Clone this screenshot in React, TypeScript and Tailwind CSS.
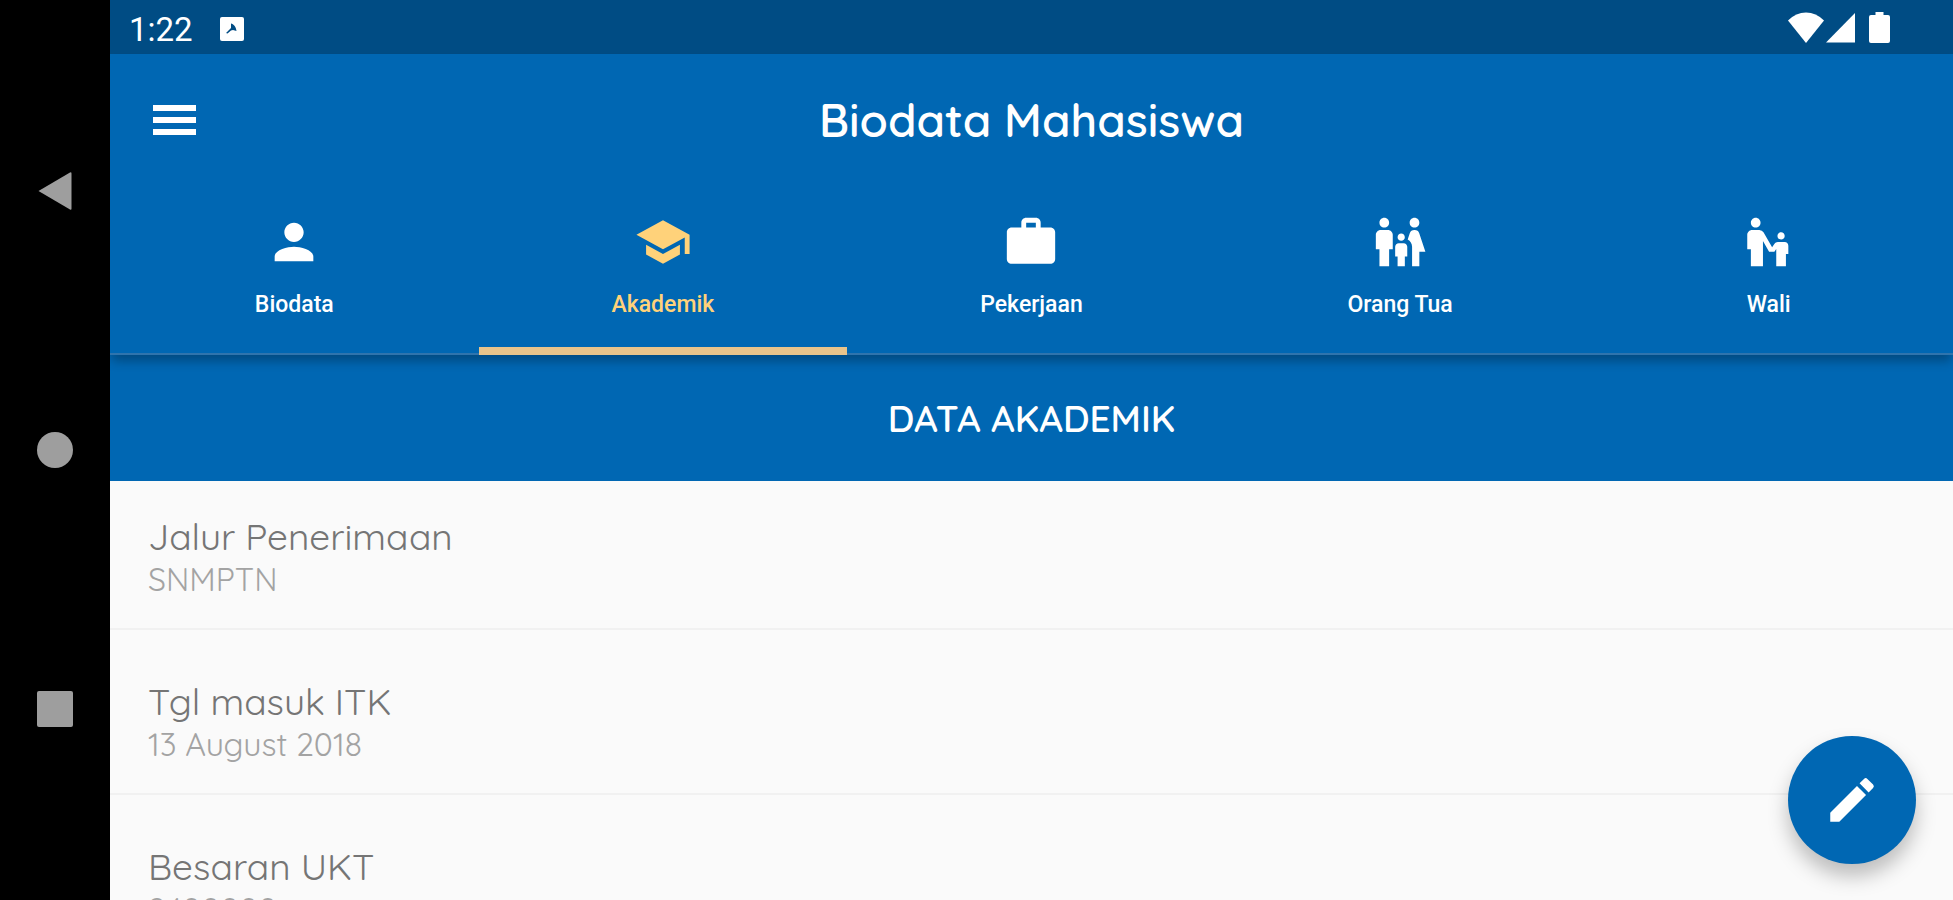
import React from 'react';
import {
  MdEdit,
  MdEscalatorWarning,
  MdFamilyRestroom,
  MdPerson,
  MdSchool,
  MdWork,
} from 'react-icons/md';

const tabs = [
  { label: 'Biodata', icon: MdPerson },
  { label: 'Akademik', icon: MdSchool },
  { label: 'Pekerjaan', icon: MdWork },
  { label: 'Orang Tua', icon: MdFamilyRestroom },
  { label: 'Wali', icon: MdEscalatorWarning },
];

const academicData = [
  { label: 'Jalur Penerimaan', value: 'SNMPTN' },
  { label: 'Tgl masuk ITK', value: '13 August 2018' },
  { label: 'Besaran UKT', value: '2400000' },
];

const SystemNav: React.FC = () => (
  <nav
    aria-label="System"
    className="flex w-[110px] shrink-0 flex-col items-center justify-center gap-[195px] bg-black text-[#9e9e9e]"
  >
    <button type="button" aria-label="Back" className="flex size-16 items-center justify-center">
      <svg className="h-10 w-9" viewBox="0 0 36 40" fill="currentColor">
        <path d="M33 1.5 1.5 20 33 38.5q1.500.8 1.500-1V2.500q0-1.800-1.500-1z" />
      </svg>
    </button>
    <button type="button" aria-label="Home" className="flex size-16 items-center justify-center">
      <span className="size-9 rounded-full bg-[#9e9e9e]" />
    </button>
    <button type="button" aria-label="Recent apps" className="flex size-16 items-center justify-center">
      <span className="size-9 rounded-xs bg-[#9e9e9e]" />
    </button>
  </nav>
);

const StatusBar: React.FC = () => (
  <div className="flex h-[54px] shrink-0 items-center justify-between bg-[#004c84] pr-[63px] pl-[19px] text-white">
    <div className="flex items-center gap-[27px] pt-1">
      <span className="font-[Roboto,sans-serif] text-[33px] leading-none">1:22</span>
      <svg className="size-6" viewBox="0 0 24 24">
        <rect width="24" height="24" rx="2" fill="#fff" />
        <path d="M11 6.500c2.500.5 5 3 5.500 7.500l-3.500-1-2 .5-3.500 3-1.500-.5 5-5z" fill="#004c84" />
      </svg>
    </div>
    <div className="flex items-center">
      <svg className="h-8 w-9" viewBox="0 0 36 32" fill="#fff">
        <path d="M18 32 0 9.500Q8 1.500 18 1.500T36 9.500z" />
      </svg>
      <svg className="ml-[2px] h-8 w-[29px]" viewBox="0 0 29 32" fill="#fff">
        <path d="M0 31.500 29 2v29.500z" />
      </svg>
      <svg className="ml-[14px] h-8 w-[21px]" viewBox="0 0 21 32" fill="#fff">
        <path d="M6.500 1h8v3H19q2 0 2 2v24q0 2-2 2H2q-2 0-2-2V6q0-2 2-2h4.500z" />
      </svg>
    </div>
  </div>
);

const App: React.FC = () => {
  const activeTab = 'Akademik';

  return (
    <div className="flex h-screen overflow-hidden bg-[#fafafa] font-[Quicksand,Lato,sans-serif]">
      <SystemNav />

      <div className="relative flex min-w-0 flex-1 flex-col">
        <StatusBar />

        {/* App bar with tabs */}
        <header className="relative z-10 shrink-0 bg-[#0067b3] text-white shadow-[0_8px_10px_-2px_rgba(0,0,0,0.28)]">
          <div className="grid h-[132px] grid-cols-[1fr_auto_1fr] items-center px-[43px]">
            <button type="button" aria-label="Open menu" className="w-fit">
              <svg className="h-[30px] w-[43px]" viewBox="0 0 43 30" fill="currentColor">
                <path d="M0 0h43v6H0zM0 12h43v6H0zM0 24h43v6H0z" />
              </svg>
            </button>
            <h1 className="text-[46px] leading-none font-semibold">Biodata Mahasiswa</h1>
          </div>

          <div role="tablist" className="grid h-[169px] grid-cols-5 border-b-2 border-[#2f74ad]">
            {tabs.map(({ label, icon: Icon }) => (
              <button
                key={label}
                type="button"
                role="tab"
                aria-selected={label === activeTab}
                className={`-mb-[2px] flex flex-col items-center border-b-8 pt-[27px] ${
                  label === activeTab ? 'border-[#e9c48b] text-[#ffd27a]' : 'border-transparent'
                }`}
              >
                <Icon className="size-[58px]" />
                <span className="mt-5 font-[Roboto,sans-serif] text-[23px] leading-[28px] font-medium">
                  {label}
                </span>
              </button>
            ))}
          </div>
        </header>

        <main className="min-h-0 flex-1 overflow-hidden">
          <h2 className="flex h-[126px] items-center justify-center bg-[#0067b3] text-[37px] leading-none font-semibold text-white">
            DATA AKADEMIK
          </h2>

          {/* Academic details */}
          <dl>
            {academicData.map((item) => (
              <div key={item.label} className="border-b-2 border-[#f1f1f1] px-[38px] pt-[49px] pb-[28px] first:pt-[33px]">
                <dt className="text-[37px] leading-[44px] text-[#757575]">{item.label}</dt>
                <dd className="text-[32px] leading-[42px] text-[#a3a3a3]">{item.value}</dd>
              </div>
            ))}
          </dl>
        </main>

        <button
          type="button"
          aria-label="Edit"
          className="absolute right-[37px] bottom-9 z-20 flex size-32 items-center justify-center rounded-full bg-[#0067b3] text-white shadow-[0_12px_20px_rgba(0,0,0,0.25)]"
        >
          <MdEdit className="size-[58px]" />
        </button>
      </div>
    </div>
  );
};

export default App;
